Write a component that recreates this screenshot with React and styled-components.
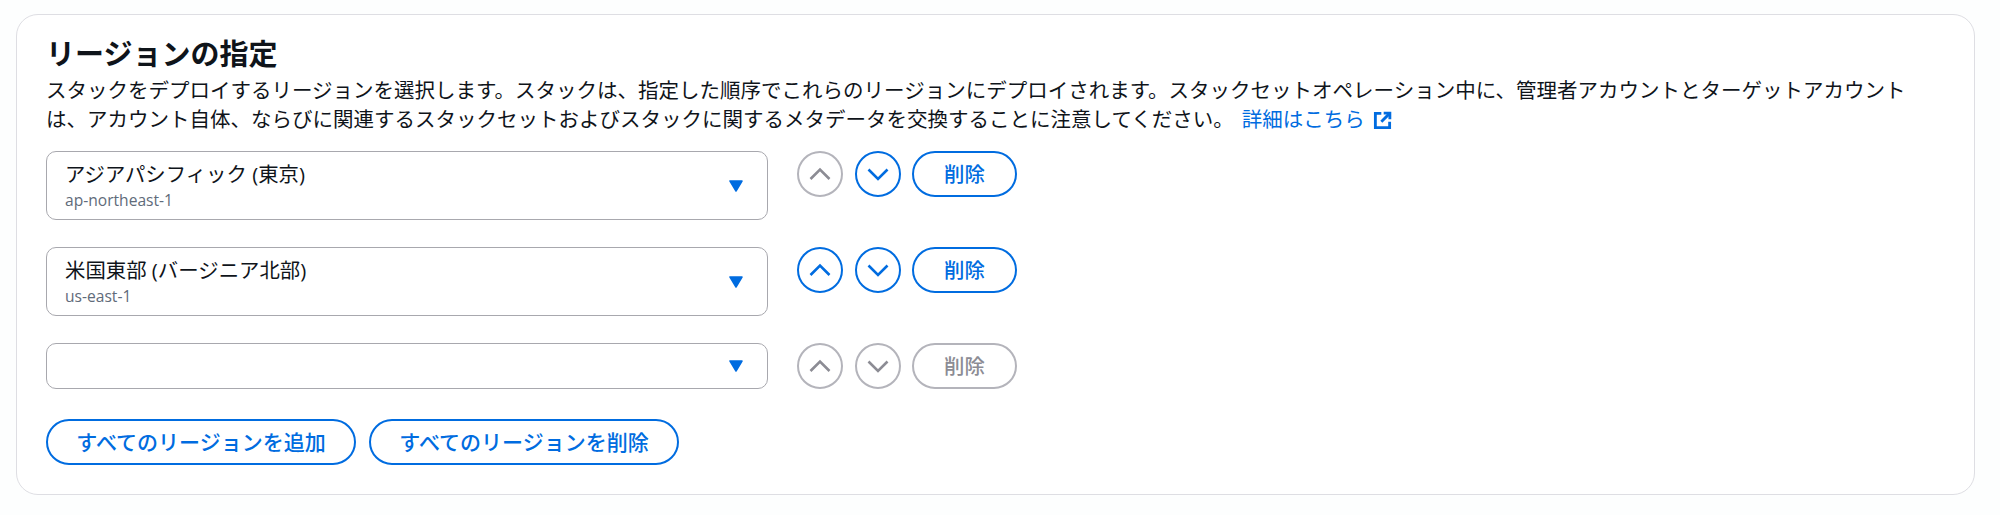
import React from "react";
import styled, { createGlobalStyle } from "styled-components";

const Global = createGlobalStyle`
  html, body { margin: 0; padding: 0; background: #fdfefe; }
  body { font-family: "Open Sans", "Noto Sans CJK JP", sans-serif; color: #0f141a; }
`;

const Card = styled.section`
  box-sizing: border-box;
  width: 1959px;
  height: 481px;
  margin: 14px 0 0 16px;
  padding: 21px 29px 0;
  background: #ffffff;
  border: 1px solid #dedee3;
  border-radius: 22px;
`;

const Title = styled.h2`
  margin: 0 0 4px;
  font-size: 29px;
  line-height: 36px;
  font-weight: 700;
  color: #0f141a;
`;

const Description = styled.p`
  margin: 0 0 18px;
  width: 1880px;
  font-size: 20.5px;
  line-height: 28.5px;
  color: #0f141a;
`;

const Link = styled.a`
  margin-left: 8px;
  color: #006ce0;
  text-decoration: none;
  white-space: nowrap;
`;

const LinkIcon = styled.svg`
  width: 19px;
  height: 19px;
  margin-left: 8px;
  vertical-align: -3px;
`;

const Rows = styled.div`
  display: flex;
  flex-direction: column;
  gap: 27px;
`;

const Row = styled.div`
  display: flex;
  align-items: flex-start;
`;

const Select = styled.div`
  box-sizing: border-box;
  display: flex;
  align-items: center;
  justify-content: space-between;
  width: 722px;
  height: ${(p) => (p.$empty ? 46 : 69)}px;
  padding: 0 24px 0 18px;
  border: 1px solid #a8a8ae;
  border-radius: 10px;
  background: #fff;
`;

const SelectText = styled.div`
  display: flex;
  flex-direction: column;
  margin-top: -2px;
`;

const SelectLabel = styled.span`
  font-size: 20.4px;
  line-height: 30px;
  color: #0f141a;
`;

const SelectCode = styled.span`
  font-size: 15.6px;
  line-height: 22px;
  color: #5f6b7a;
`;

const Caret = styled.svg`
  width: 14px;
  height: 12px;
  flex: none;
`;

const Controls = styled.div`
  display: flex;
  gap: 11.5px;
  margin-left: 29px;
`;

const RoundButton = styled.button`
  box-sizing: border-box;
  width: 46px;
  height: 46px;
  padding: 0;
  display: flex;
  align-items: center;
  justify-content: center;
  background: #fff;
  border: 2.5px solid ${(p) => (p.disabled ? "#b4b4bb" : "#006ce0")};
  color: ${(p) => (p.disabled ? "#8c8c94" : "#006ce0")};
  border-radius: 50%;
`;

const Chevron = styled.svg`
  width: 24px;
  height: 24px;
`;

const PillButton = styled.button`
  box-sizing: border-box;
  width: ${(p) => p.$width}px;
  height: 46px;
  padding: 0;
  background: #fff;
  border: 2.5px solid ${(p) => (p.disabled ? "#b4b4bb" : "#006ce0")};
  color: ${(p) => (p.disabled ? "#8c8c94" : "#006ce0")};
  border-radius: 23px;
  font-family: inherit;
  font-size: ${(p) => p.$size || 20.4}px;
  font-weight: 500;
  line-height: 1;
`;

const Footer = styled.div`
  display: flex;
  gap: 13px;
  margin-top: 30px;
`;

const ChevronIcon = ({ up }) => (
  <Chevron viewBox="0 0 24 24" fill="none" stroke="currentColor" strokeWidth="2.6">
    <polyline points={up ? "2.5,17 12,7.5 21.5,17" : "2.5,7.5 12,17 21.5,7.5"} />
  </Chevron>
);

const RegionRow = ({ label, code, upDisabled, downDisabled, removeDisabled }) => (
  <Row>
    <Select $empty={!label}>
      {label ? (
        <SelectText>
          <SelectLabel>{label}</SelectLabel>
          <SelectCode>{code}</SelectCode>
        </SelectText>
      ) : (
        <span />
      )}
      <Caret viewBox="0 0 14 12">
        <path d="M1 1h12L7 11z" fill="#006ce0" stroke="#006ce0" strokeWidth="1.5" strokeLinejoin="round" />
      </Caret>
    </Select>
    <Controls>
      <RoundButton disabled={upDisabled} aria-label="up"><ChevronIcon up /></RoundButton>
      <RoundButton disabled={downDisabled} aria-label="down"><ChevronIcon /></RoundButton>
      <PillButton $width={105} disabled={removeDisabled}>削除</PillButton>
    </Controls>
  </Row>
);

export default function App() {
  return (
    <>
      <Global />
      <Card>
        <Title>リージョンの指定</Title>
        <Description>
          スタックをデプロイするリージョンを選択します。スタックは、指定した順序でこれらのリージョンにデプロイされます。スタックセットオペレーション中に、管理者アカウントとターゲットアカウントは、アカウント自体、ならびに関連するスタックセットおよびスタックに関するメタデータを交換することに注意してください。
          <Link href="#">
            詳細はこちら
            <LinkIcon viewBox="0 0 16 16" fill="none" stroke="currentColor" strokeWidth="2.4">
              <path d="M7 2H2v12h12V9" />
              <path d="M9 1.8h5.2V7" />
              <path d="M14 2 7 9" />
            </LinkIcon>
          </Link>
        </Description>
        <Rows>
          <RegionRow label="アジアパシフィック (東京)" code="ap-northeast-1" upDisabled />
          <RegionRow label="米国東部 (バージニア北部)" code="us-east-1" />
          <RegionRow upDisabled downDisabled removeDisabled />
        </Rows>
        <Footer>
          <PillButton $width={310} $size={21}>すべてのリージョンを追加</PillButton>
          <PillButton $width={310} $size={21}>すべてのリージョンを削除</PillButton>
        </Footer>
      </Card>
    </>
  );
}
